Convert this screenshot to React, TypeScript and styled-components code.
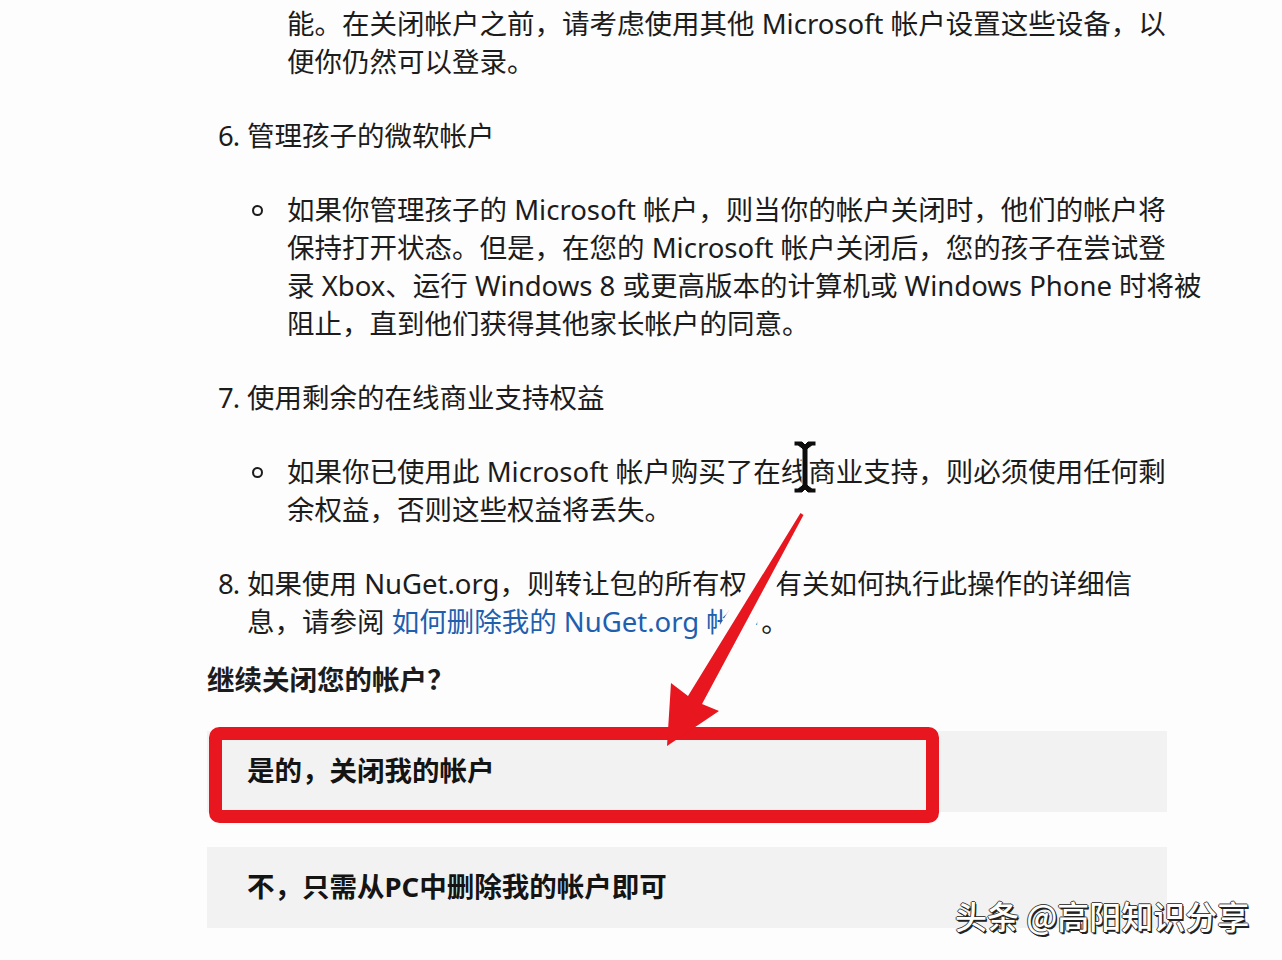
import React from 'react';
import styled, { createGlobalStyle } from 'styled-components';

const GlobalStyle = createGlobalStyle`
  html, body {
    margin: 0;
    padding: 0;
    background: #fdfdfe;
  }
  body {
    font-family: "Noto Sans", "Noto Sans CJK SC", sans-serif;
    color: #1c1c1c;
  }
`;

const Page = styled.div`
  position: relative;
  width: 1282px;
  height: 960px;
  overflow: hidden;
  background: #fdfdfe;
  font-size: 27.5px;
  line-height: 38px;
`;

const Article = styled.div`
  display: flex;
  flex-direction: column;
  gap: 36px;
  padding: 5px 0 0 218px;
`;

const Step = styled.div`
  display: grid;
  grid-template-columns: 29px 1fr;
  white-space: nowrap;
`;

const StepNumber = styled.span`
  letter-spacing: -1px;
`;

const StepBody = styled.div`
  display: flex;
  flex-direction: column;
  gap: 36px;
`;

const SubItem = styled.div<{ $bullet?: boolean }>`
  position: relative;
  padding-left: ${(p) => (p.$bullet ? 40 : 69)}px;
  white-space: nowrap;

  &::before {
    content: '';
    display: ${(p) => (p.$bullet ? 'block' : 'none')};
    position: absolute;
    left: 5px;
    top: 14px;
    width: 7px;
    height: 7px;
    border: 2px solid #1c1c1c;
    border-radius: 50%;
  }
`;

const Link = styled.a`
  color: #1f5fae;
  text-decoration: none;
`;

const Question = styled.h3`
  margin: 20px 0 0 207px;
  font-size: 27.5px;
  line-height: 38px;
  font-weight: 700;
`;

const Choices = styled.div`
  display: flex;
  flex-direction: column;
  gap: 35px;
  margin: 32px 0 0 207px;
  width: 960px;
`;

const Choice = styled.button`
  display: flex;
  align-items: center;
  height: 81px;
  padding: 0 0 6px 40px;
  border: none;
  background: #f2f2f3;
  font-family: inherit;
  font-size: 27.5px;
  font-weight: 700;
  color: #141414;
  text-align: left;
  cursor: pointer;
`;

const Watermark = styled.div`
  position: absolute;
  left: 955px;
  top: 895px;
  font-family: "Noto Sans CJK SC", sans-serif;
  font-size: 32px;
  font-weight: 500;
  line-height: 40px;
  color: #ffffff;
  white-space: nowrap;
  text-shadow: 1.5px 1.5px 0 #222, -1px 0 0 #444, 0 -1px 0 #444, 1px 0 0 #222,
    0 1px 0 #222;
`;

const Annotation = styled.svg`
  position: absolute;
  inset: 0;
  pointer-events: none;
`;

const arrowPoints =
  '800.5,513 803.5,515 702,704 719,711 667,746 671,683 688,696';

export default function App() {
  return (
    <>
      <GlobalStyle />
      <Page>
        <Article>
          <SubItem>
            能。在关闭帐户之前，请考虑使用其他 Microsoft 帐户设置这些设备，以
            <br />
            便你仍然可以登录。
          </SubItem>

          <Step>
            <StepNumber>6.</StepNumber>
            <StepBody>
              <span>管理孩子的微软帐户</span>
              <SubItem $bullet>
                如果你管理孩子的 Microsoft 帐户，则当你的帐户关闭时，他们的帐户将
                <br />
                保持打开状态。但是，在您的 Microsoft 帐户关闭后，您的孩子在尝试登
                <br />
                录 Xbox、运行 Windows 8 或更高版本的计算机或 Windows Phone 时将被
                <br />
                阻止，直到他们获得其他家长帐户的同意。
              </SubItem>
            </StepBody>
          </Step>

          <Step>
            <StepNumber>7.</StepNumber>
            <StepBody>
              <span>使用剩余的在线商业支持权益</span>
              <SubItem $bullet>
                如果你已使用此 Microsoft 帐户购买了在线商业支持，则必须使用任何剩
                <br />
                余权益，否则这些权益将丢失。
              </SubItem>
            </StepBody>
          </Step>

          <Step>
            <StepNumber>8.</StepNumber>
            <StepBody>
              <span>
                如果使用 NuGet.org，则转让包的所有权。有关如何执行此操作的详细信
                <br />
                息，请参阅 <Link href="#">如何删除我的 NuGet.org 帐户</Link>。
              </span>
            </StepBody>
          </Step>
        </Article>

        <Question>继续关闭您的帐户？</Question>

        <Choices>
          <Choice>是的，关闭我的帐户</Choice>
          <Choice>不，只需从PC中删除我的帐户即可</Choice>
        </Choices>

        <Watermark>头条 @高阳知识分享</Watermark>

        <Annotation width="1282" height="960" viewBox="0 0 1282 960">
          <defs>
            <clipPath id="haloClip">
              <rect x="0" y="0" width="1282" height="700" />
            </clipPath>
          </defs>
          <polygon
            points={arrowPoints}
            fill="#fdfdfe"
            stroke="#fdfdfe"
            strokeWidth="20"
            strokeLinejoin="round"
            clipPath="url(#haloClip)"
          />
          <rect
            x="215.5"
            y="733.5"
            width="717"
            height="83"
            rx="4"
            fill="none"
            stroke="#e8161f"
            strokeWidth="13"
          />
          <polygon points={arrowPoints} fill="#e8161f" />
          <path
            d="M794 441 h8 l3 3 l3 -3 h8 v5 h-4 l-4 3 v36 l4 3 h4 v5 h-8 l-3 -3 l-3 3 h-8 v-5 h4 l4 -3 v-36 l-4 -3 h-4 z"
            fill="#0d0d0d"
            stroke="#fff"
            strokeWidth="1"
          />
        </Annotation>
      </Page>
    </>
  );
}
